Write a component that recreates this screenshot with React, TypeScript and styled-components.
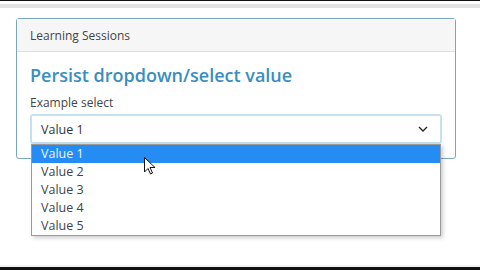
import React from "react";
import styled, { createGlobalStyle } from "styled-components";

const Global = createGlobalStyle`
  html, body { margin: 0; padding: 0; background: #fff; }
  body { font-family: "Open Sans", "Noto Sans", sans-serif; }
`;

const Page = styled.div`
  position: relative;
  width: 480px;
  height: 270px;
  overflow: hidden;
  background: #fff;
  display: flex;
  flex-direction: column;
`;

const TopBar = styled.div`
  height: 1px;
  background: #111;
  border-bottom: 3px solid #fff;
  box-shadow: 0 4px 0 0 #e2e2e2;
  flex: none;
`;

const Content = styled.div`
  flex: 1;
  padding: 14px 24px 0 16px;
`;

const BottomBar = styled.div`
  height: 3px;
  background: #111;
  flex: none;
  box-shadow: 0 -2px 0 0 #f0f0f0;
`;

const Card = styled.div`
  width: 438px;
  border: 1px solid #7aa6bb;
  border-radius: 3px;
  background: #fff;
`;

const CardHeader = styled.div`
  height: 32px;
  display: flex;
  align-items: center;
  padding: 0 13px;
  background: #f6f6f6;
  border-bottom: 1px solid #dedede;
  font-size: 12px;
  color: #444;
`;

const CardBody = styled.div`
  padding: 11px 13px 14px 13px;
`;

const Title = styled.h1`
  margin: 0 0 7px 0;
  font-size: 18px;
  line-height: 24px;
  font-weight: 600;
  color: #3a8ec0;
`;

const Label = styled.div`
  font-size: 12px;
  line-height: 17px;
  color: #444;
  margin-bottom: 3px;
`;

const SelectWrap = styled.div`
  position: relative;
`;

const SelectBox = styled.div`
  height: 26px;
  border: 2px solid #c3e1f0;
  border-radius: 3px;
  display: flex;
  align-items: center;
  justify-content: space-between;
  padding: 0 12px 0 9px;
  font-size: 12.5px;
  color: #333;
  background: #fff;
`;

const Chevron = styled.svg`
  width: 10px;
  height: 6px;
`;

const List = styled.ul`
  position: absolute;
  left: 1px;
  right: 1px;
  top: 30px;
  margin: 0;
  padding: 0;
  list-style: none;
  background: #fff;
  border: 1px solid #9a9a9a;
  box-shadow: 2px 2px 4px rgba(0, 0, 0, 0.2);
`;

const Option = styled.li<{ $active?: boolean }>`
  height: 18px;
  line-height: 18px;
  padding: 0 9px;
  font-size: 12.5px;
  color: ${(p) => (p.$active ? "#eaf5ff" : "#444")};
  background: ${(p) => (p.$active ? "#248cf2" : "transparent")};
`;

const Cursor = styled.svg`
  position: absolute;
  left: 144px;
  top: 157px;
  width: 12px;
  height: 18px;
`;

export default function App() {
  const values = ["Value 1", "Value 2", "Value 3", "Value 4", "Value 5"];
  return (
    <>
      <Global />
      <Page>
        <TopBar />
        <Content>
          <Card>
            <CardHeader>Learning Sessions</CardHeader>
            <CardBody>
              <Title>Persist dropdown/select value</Title>
              <Label>Example select</Label>
              <SelectWrap>
                <SelectBox>
                  <span>Value 1</span>
                  <Chevron viewBox="0 0 10 6">
                    <path d="M1 1 L5 5 L9 1" fill="none" stroke="#222" strokeWidth="1.3" />
                  </Chevron>
                </SelectBox>
                <List>
                  {values.map((v, i) => (
                    <Option key={v} $active={i === 0}>
                      {v}
                    </Option>
                  ))}
                </List>
              </SelectWrap>
            </CardBody>
          </Card>
        </Content>
        <BottomBar />
        <Cursor viewBox="0 0 12 18">
          <path
            d="M0.5 0.5 L0.5 15 L4 11.5 L6.5 17 L8.5 16 L6 10.5 L11 10.5 Z"
            fill="#fff"
            stroke="#111"
            strokeWidth="1"
            strokeLinejoin="round"
          />
        </Cursor>
      </Page>
    </>
  );
}
